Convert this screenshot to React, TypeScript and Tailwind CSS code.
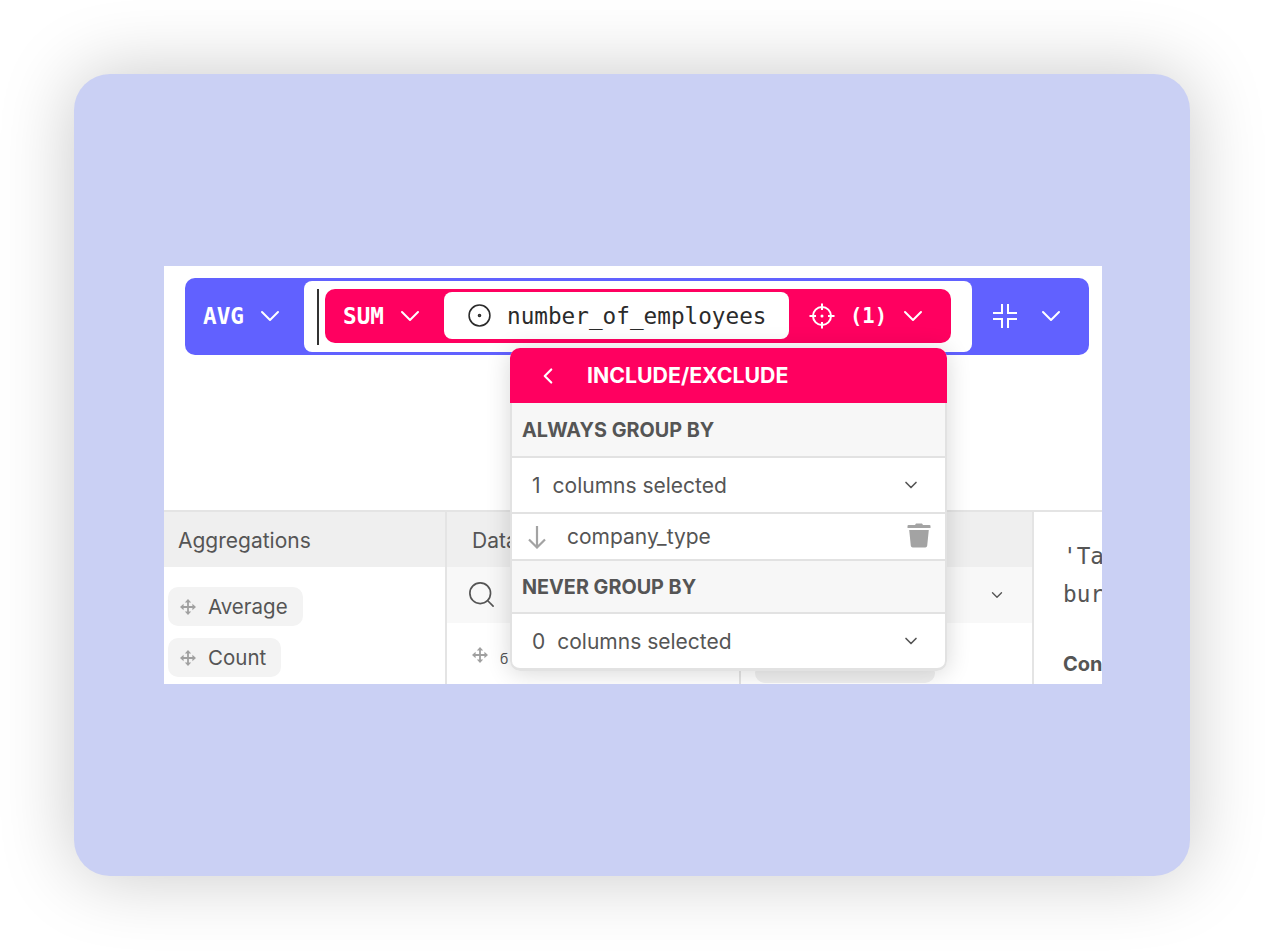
import React from 'react';
import { ChevronDown, ChevronLeft, CircleDot, Search } from 'lucide-react';

const mono = "font-['DejaVu_Sans_Mono',monospace]";
const inter = "font-['Inter',sans-serif]";

const CollapseIcon = () => (
  <svg width="26" height="26" viewBox="0 0 26 26" fill="none" stroke="currentColor" strokeWidth="2">
    <path d="M10 1v9H1M16 1v9h9M10 25v-9H1M16 25v-9h9" />
  </svg>
);

const TargetIcon = () => (
  <svg width="26" height="26" viewBox="0 0 26 26" fill="none" stroke="currentColor" strokeWidth="2">
    <circle cx="13" cy="13" r="9" />
    <path d="M13 0.500v6.500M13 19v6.500M0.500 13H7M19 13h6.500" />
    <circle cx="13" cy="13" r="1.500" fill="currentColor" stroke="none" />
  </svg>
);

const TrashIcon = () => (
  <svg width="24" height="26" viewBox="0 0 24 26" fill="#a3a3a3">
    <path d="M9 1.500h6l1 1.600h6.500a1 1 0 0 1 1 1V6H.5V4.100a1 1 0 0 1 1-1H8z" />
    <path d="M2.200 8h19.600l-1.600 15.800a2 2 0 0 1-2 1.700H5.800a2 2 0 0 1-2-1.700z" />
  </svg>
);

const DownArrowIcon = () => (
  <svg width="20" height="24" viewBox="0 0 20 24" fill="none" stroke="#a3a3a3" strokeWidth="2.200">
    <path d="M10 1v21M2 14.500l8 8 8-8" />
  </svg>
);

// four way drag handle with solid arrow heads
const DragIcon = () => (
  <svg width="16" height="16" viewBox="0 0 16 16" fill="#a0a0a0" className="shrink-0">
    <path d="M8 0l3.200 3.600H4.800zM8 16l-3.200-3.600h6.400zM0 8l3.600-3.200v6.400zM16 8l-3.600 3.200V4.800z" />
    <path d="M8 2.500v11M2.500 8h11" stroke="#a0a0a0" strokeWidth="1.800" />
  </svg>
);

const Chip = ({ label }: { label: string }) => (
  <div className="flex h-[39px] w-fit items-center gap-[12px] rounded-[10px] bg-[#f3f3f3] pl-[12px] pr-[15px] text-[20.500px] text-[#555]">
    <DragIcon />
    <span className="pt-[2px]">{label}</span>
  </div>
);

const PopoverSection = ({ title, height }: { title: string; height: string }) => (
  <div className={`flex ${height} items-center border-b-2 border-[#e2e2e2] bg-[#f7f7f7] pl-[10px] pt-[2px] text-[19.800px] font-bold text-[#555]`}>
    {title}
  </div>
);

const PopoverSelect = ({ count }: { count: string }) => (
  <div className="flex h-[54px] items-center justify-between pl-[20px] pr-[24px] text-[21px] text-[#555]">
    <span className="flex gap-[12px] pt-[1px]">
      <span>{count}</span>
      <span>columns selected</span>
    </span>
    <ChevronDown size={20} strokeWidth={2} className="text-[#555]" />
  </div>
);

export default function App() {
  return (
    <div className={`min-h-[951px] bg-white pl-[74px] pt-[74px] ${inter}`}>
      <div className="h-[802px] w-[1116px] rounded-[36px] bg-[#cad0f4] pl-[90px] pt-[192px] shadow-[0_0_75px_rgba(0,0,0,0.22)]">
        <div className="relative flex h-[418px] w-[938px] flex-col overflow-hidden bg-white">
          {/* formula bar */}
          <div className="ml-[21px] mt-[12px] flex h-[77px] w-[904px] items-center rounded-[10px] bg-[#6161ff] text-white">
            <div className={`mb-[1px] flex w-[119px] items-center pl-[18px] text-[22.700px] font-bold ${mono}`}>
              <span className="pt-[1px]">AVG</span>
              <ChevronDown size={32} strokeWidth={1.500} className="ml-[10px]" />
            </div>
            <div className="flex h-[71px] w-[668px] items-center rounded-[8px] bg-white pl-[13px]">
              <div className="mr-[6px] h-[56px] w-[2px] bg-[#333]" />
              <div className={`mb-[2px] flex h-[54px] w-[626px] items-center rounded-[10px] bg-[#ff0060] pl-[18px] ${mono}`}>
                <span className="pt-[1px] text-[22.700px] font-bold">SUM</span>
                <ChevronDown size={32} strokeWidth={1.500} className="ml-[10px]" />
                <div className="ml-[18px] flex h-[47px] w-[345px] items-center rounded-[8px] bg-white pl-[23px] text-[22.700px] text-[#2b2b2b]">
                  <CircleDot size={25} strokeWidth={1.500} className="mr-[15px]" />
                  <span className="pt-[1px]">number_of_employees</span>
                </div>
                <span className="ml-[20px]">
                  <TargetIcon />
                </span>
                <span className="ml-[15px] pt-[1px] text-[20.500px] font-bold">(1)</span>
                <ChevronDown size={32} strokeWidth={1.500} className="ml-[10px]" />
              </div>
            </div>
            <div className="mb-[2px] ml-[20px] flex items-center">
              <CollapseIcon />
              <ChevronDown size={32} strokeWidth={1.500} className="ml-[17px]" />
            </div>
          </div>

          {/* bottom panels */}
          <div className="mt-[155px] flex h-[174px] border-t-2 border-[#e4e4e4]">
            <div className="w-[283px] shrink-0 border-r-2 border-[#e4e4e4]">
              <div className="flex h-[55px] items-center bg-[#efefef] pl-[14px] pt-[3px] text-[21px] text-[#555]">Aggregations</div>
              <div className="flex flex-col gap-[12px] pl-[4px] pt-[20px]">
                <Chip label="Average" />
                <Chip label="Count" />
              </div>
            </div>
            <div className="w-[294px] shrink-0 border-r-2 border-[#e4e4e4]">
              <div className="flex h-[55px] items-center bg-[#efefef] pl-[25px] pt-[3px] text-[21px] text-[#555]">Data</div>
              <div className="flex h-[56px] items-center bg-[#f8f8f8] pb-[2px] pl-[19px] text-[#555]">
                <Search size={31} strokeWidth={1.300} />
              </div>
              <div className="flex items-center gap-[12px] pl-[25px] pt-[18px] text-[#555]">
                <DragIcon />
                <span className="mt-[7px] text-[14px]">б</span>
              </div>
            </div>
            <div className="w-[293px] shrink-0 border-r-2 border-[#e4e4e4]">
              <div className="h-[55px] bg-[#efefef]" />
              <div className="flex h-[56px] items-center justify-end bg-[#f8f8f8] pr-[26px] text-[#555]">
                <ChevronDown size={18} strokeWidth={1.800} />
              </div>
              <div className="ml-[14px] mt-[40px] h-[20px] w-[180px] rounded-[12px] bg-[#f0f0f0]" />
            </div>
            <div className="min-w-0 flex-1 overflow-hidden whitespace-nowrap pl-[29px] pt-[25px] text-[#555]">
              <div className={`text-[22.700px] leading-[38px] ${mono}`}>'Ta</div>
              <div className={`text-[22.700px] leading-[38px] ${mono}`}>bur</div>
              <div className="mt-[36px] text-[20px] font-bold">Con</div>
            </div>
          </div>

          {/* include/exclude popover */}
          <div className="absolute left-[346px] top-[82px] w-[437px] rounded-[10px] bg-white shadow-[0_2px_24px_rgba(0,0,0,0.16)]">
            <div className="flex h-[55px] items-center rounded-t-[10px] bg-[#ff0060] pl-[25px] text-[21.300px] font-bold text-white">
              <ChevronLeft size={26} strokeWidth={2} />
              <span className="ml-[26px]">INCLUDE/EXCLUDE</span>
            </div>
            <div className="rounded-b-[10px] border-x-2 border-b-[3px] border-[#e2e2e2]">
              <PopoverSection title="ALWAYS GROUP BY" height="h-[55px]" />
              <div className="border-b-2 border-[#e2e2e2]">
                <PopoverSelect count="1" />
              </div>
              <div className="flex h-[47px] items-center justify-between border-b-2 border-[#e2e2e2] pl-[15px] pr-[14px] text-[21px] text-[#555]">
                <span className="flex items-center gap-[20px]">
                  <DownArrowIcon />
                  company_type
                </span>
                <span className="mb-[3px]">
                  <TrashIcon />
                </span>
              </div>
              <PopoverSection title="NEVER GROUP BY" height="h-[53px]" />
              <PopoverSelect count="0" />
            </div>
          </div>
        </div>
      </div>
    </div>
  );
}
